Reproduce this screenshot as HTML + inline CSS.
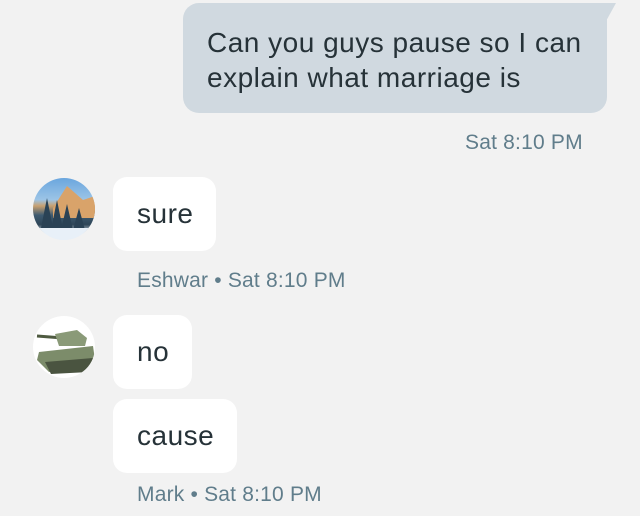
<!DOCTYPE html>
<html><head><style>
body{margin:0;width:640px;height:516px;background:#f2f2f2;font-family:"Liberation Sans",Roboto,sans-serif;position:relative;overflow:hidden;color:#263238}
.b{position:absolute;box-sizing:border-box;font-size:28px;letter-spacing:0.5px}
.out{left:183px;top:3px;width:424px;height:110px;background:#d0d9e0;border-radius:16px 0 16px 16px;padding:22px 0 0 24px;line-height:35px}
.tail{position:absolute;left:600px;top:3px;width:16px;height:16px;background:#d0d9e0;clip-path:polygon(0 0,100% 0,45% 100%,0 100%)}
.in{background:#fff;border-radius:14px;padding:0 23px 0 24px;line-height:74px;height:74px;left:113px}
.ts{position:absolute;font-size:21px;letter-spacing:0.2px;color:#607d8b}
.av{position:absolute;left:33px;width:62px;height:62px;border-radius:50%;overflow:hidden}
</style></head><body>
<div class="tail"></div>
<div class="b out">Can you guys pause so I can<br>explain what marriage is</div>
<div class="ts" style="left:465px;top:131px">Sat 8:10 PM</div>

<div class="av" style="top:178px;background:linear-gradient(180deg,#6aa6de 0%,#9cc4e6 35%,#c8a070 45%,#3e5a70 60%,#2e4658 75%,#e6eef6 90%)">
<svg width="62" height="62"><polygon points="20,30 34,8 50,22 62,18 62,40 20,40" fill="#d9a36a"/><g fill="#2a4255"><polygon points="8,50 14,20 20,50"/><polygon points="18,52 24,22 30,52"/><polygon points="28,52 34,26 40,52"/><polygon points="40,52 46,30 52,52"/></g><rect y="50" width="62" height="12" fill="#e8f0f8"/></svg>
</div>
<div class="b in" style="top:177px">sure</div>
<div class="ts" style="left:137px;top:269px">Eshwar • Sat 8:10 PM</div>

<div class="av" style="top:316px;background:#fff">
<svg width="62" height="62"><line x1="4" y1="20" x2="30" y2="22" stroke="#4e5a40" stroke-width="3"/><path d="M22 18 L44 14 L54 22 L52 30 L26 30 Z" fill="#8a9a78"/><path d="M6 36 L60 30 L62 44 L54 54 L16 56 L4 44 Z" fill="#7c8c6a"/><path d="M12 46 L60 42 L56 56 L18 58 Z" fill="#4a5440"/></svg>
</div>
<div class="b in" style="top:315px">no</div>
<div class="b in" style="top:399px">cause</div>
<div class="ts" style="left:137px;top:483px">Mark • Sat 8:10 PM</div>
</body></html>
